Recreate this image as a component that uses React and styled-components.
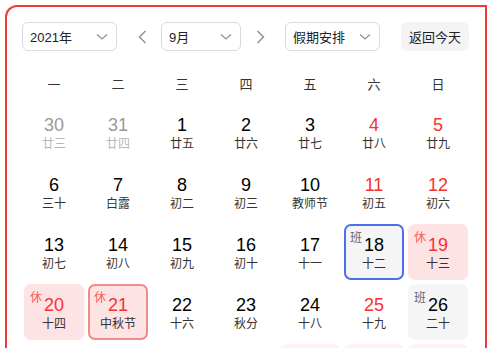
import React from "react";
import styled, { createGlobalStyle, css } from "styled-components";

const Global = createGlobalStyle`
  html, body { margin: 0; padding: 0; overflow: hidden; background: #fff; }
  body { font-family: "Liberation Sans", "Noto Sans CJK SC", Arial, sans-serif; }
`;

const Frame = styled.div`
  margin: 5px 0 0 5px;
  width: 482px;
  height: 343px;
  overflow: hidden;
  box-sizing: border-box;
  border: 2px solid #f03a3a;
  border-bottom: none;
  border-radius: 12px 0 0 0;
  padding: 15px 0 0 15px;
`;

const Toolbar = styled.div`
  display: flex;
  align-items: center;
  height: 29px;
`;

const Select = styled.div`
  box-sizing: border-box;
  width: ${(p) => p.$w}px;
  height: 29px;
  border: 1px solid #d8dae2;
  border-radius: 6px;
  display: flex;
  align-items: center;
  justify-content: space-between;
  padding: 0 8px 0 7px;
  font-size: 13px;
  color: #222;
`;

const ArrowBtn = styled.div`
  width: 24px;
  height: 29px;
  display: flex;
  align-items: center;
  justify-content: center;
  margin: 0 ${(p) => p.$mr}px 0 ${(p) => p.$ml}px;
`;

const TodayBtn = styled.div`
  margin-left: 21px;
  width: 68px;
  height: 29px;
  border-radius: 6px;
  background: #f4f4f6;
  display: flex;
  align-items: center;
  justify-content: center;
  font-size: 13px;
  color: #222;
`;

const WeekRow = styled.div`
  display: grid;
  grid-template-columns: repeat(7, 60px);
  column-gap: 4px;
  margin: 12px 0 0 2px;
  height: 40px;
  align-items: center;
`;

const WeekDay = styled.div`
  text-align: center;
  font-size: 13px;
  color: #333;
`;

const Grid = styled.div`
  display: grid;
  grid-template-columns: repeat(7, 60px);
  grid-auto-rows: 56px;
  gap: 4px;
  margin: 1px 0 0 2px;
`;

const Cell = styled.div`
  position: relative;
  box-sizing: border-box;
  border-radius: 7px;
  padding-top: 11px;
  text-align: center;
  ${(p) => p.$bg === "rest" && css`background: #fde3e3;`}
  ${(p) => p.$bg === "restLight" && css`background: #fff2f2;`}
  ${(p) => p.$bg === "work" && css`background: #f5f5f6;`}
  ${(p) => p.$ring && css`box-shadow: inset 0 0 0 2px ${p.$ring};`}
`;

const Num = styled.div`
  font-size: 18px;
  line-height: 20px;
  color: ${(p) => (p.$other ? "#9a9a9a" : p.$red ? "#f73131" : "#000")};
`;

const Lunar = styled.div`
  margin-top: 1px;
  font-size: 12px;
  line-height: 16px;
  color: ${(p) => (p.$other ? "#b8b8b8" : "#333")};
`;

const Badge = styled.span`
  position: absolute;
  left: 6px;
  top: 7px;
  font-size: 12px;
  line-height: 14px;
  color: ${(p) => (p.$type === "rest" ? "#f76060" : "#626675")};
`;

const Chevron = () => (
  <svg width="12" height="8" viewBox="0 0 12 8" fill="none">
    <path d="M1 1.5 L6 6 L11 1.5" stroke="#8e93a3" strokeWidth="1.3" />
  </svg>
);

const Arrow = ({ dir }) => (
  <svg width="9" height="14" viewBox="0 0 9 14" fill="none">
    <path
      d={dir === "left" ? "M7.5 1 L1.5 7 L7.5 13" : "M1.5 1 L7.5 7 L1.5 13"}
      stroke="#8e93a3"
      strokeWidth="1.5"
    />
  </svg>
);

const weekdays = ["一", "二", "三", "四", "五", "六", "日"];

const days = [
  { d: 30, l: "廿三", other: true },
  { d: 31, l: "廿四", other: true },
  { d: 1, l: "廿五" },
  { d: 2, l: "廿六" },
  { d: 3, l: "廿七" },
  { d: 4, l: "廿八", red: true },
  { d: 5, l: "廿九", red: true },
  { d: 6, l: "三十" },
  { d: 7, l: "白露" },
  { d: 8, l: "初二" },
  { d: 9, l: "初三" },
  { d: 10, l: "教师节" },
  { d: 11, l: "初五", red: true },
  { d: 12, l: "初六", red: true },
  { d: 13, l: "初七" },
  { d: 14, l: "初八" },
  { d: 15, l: "初九" },
  { d: 16, l: "初十" },
  { d: 17, l: "十一" },
  { d: 18, l: "十二", badge: "work", bg: "work", ring: "#4e6ef2" },
  { d: 19, l: "十三", red: true, badge: "rest", bg: "rest" },
  { d: 20, l: "十四", red: true, badge: "rest", bg: "rest" },
  { d: 21, l: "中秋节", red: true, badge: "rest", bg: "rest", ring: "#f28a8a" },
  { d: 22, l: "十六" },
  { d: 23, l: "秋分" },
  { d: 24, l: "十八" },
  { d: 25, l: "十九", red: true },
  { d: 26, l: "二十", badge: "work", bg: "work" },
  // next row: only the top edge of its cells is in view
  { hidden: true },
  { hidden: true },
  { hidden: true },
  { hidden: true },
  { hidden: true, bg: "restLight" },
  { hidden: true, bg: "restLight" },
  { hidden: true, bg: "restLight" },
];

export default function App() {
  return (
    <>
      <Global />
      <Frame>
        <Toolbar>
          <Select $w={95}>
            <span>2021年</span>
            <Chevron />
          </Select>
          <ArrowBtn $ml={13} $mr={7}>
            <Arrow dir="left" />
          </ArrowBtn>
          <Select $w={80}>
            <span>9月</span>
            <Chevron />
          </Select>
          <ArrowBtn $ml={7} $mr={13}>
            <Arrow dir="right" />
          </ArrowBtn>
          <Select $w={95}>
            <span>假期安排</span>
            <Chevron />
          </Select>
          <TodayBtn>返回今天</TodayBtn>
        </Toolbar>
        <WeekRow>
          {weekdays.map((w) => (
            <WeekDay key={w}>{w}</WeekDay>
          ))}
        </WeekRow>
        <Grid>
          {days.map((c, i) => (
            <Cell key={i} $bg={c.bg} $ring={c.ring}>
              {!c.hidden && (
                <>
                  {c.badge && (
                    <Badge $type={c.badge}>{c.badge === "rest" ? "休" : "班"}</Badge>
                  )}
                  <Num $other={c.other} $red={c.red}>{c.d}</Num>
                  <Lunar $other={c.other}>{c.l}</Lunar>
                </>
              )}
            </Cell>
          ))}
        </Grid>
      </Frame>
    </>
  );
}
